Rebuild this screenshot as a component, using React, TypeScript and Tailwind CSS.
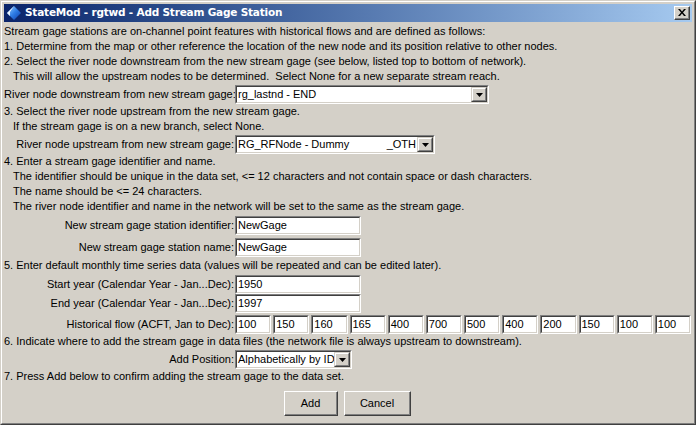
import React from "react";

// Classic Windows look: sunken fields, raised buttons
const sunken =
  "border-t border-l border-t-[#808080] border-l-[#808080] border-b border-r border-b-white border-r-white";
const sunkenInner =
  "border-t border-l border-t-[#404040] border-l-[#404040] border-b border-r border-b-[#d4d0c8] border-r-[#d4d0c8]";

function TextField({ value, className }: { value: string; className: string }) {
  return (
    <div className={`${sunken} ${className} h-[19px]`}>
      <div className={`${sunkenInner} h-full bg-white pl-[1px] leading-[15px]`}>{value}</div>
    </div>
  );
}

function ArrowButton() {
  return (
    <div className="h-full w-[16px] border-t border-l border-t-[#d4d0c8] border-l-[#d4d0c8] border-b border-r border-b-[#404040] border-r-[#404040]">
      <div className="flex h-full items-center justify-center border-t border-l border-t-white border-l-white border-b border-r border-b-[#808080] border-r-[#808080] bg-[#d4d0c8]">
        <svg width="7" height="4" viewBox="0 0 7 4">
          <path d="M0 0H7L3.5 4Z" fill="#000" />
        </svg>
      </div>
    </div>
  );
}

function Combo({ value, className, extra }: { value: string; className: string; extra?: string }) {
  return (
    <div className={`${sunken} ${className} h-[19px]`}>
      <div className={`${sunkenInner} flex h-full bg-white`}>
        <div className="flex flex-1 justify-between pl-[1px] leading-[15px] whitespace-nowrap overflow-hidden">
          <span>{value}</span>
          {extra && <span className="pr-[1px]">{extra}</span>}
        </div>
        <ArrowButton />
      </div>
    </div>
  );
}

function Line({ children, indent, className }: { children: React.ReactNode; indent?: boolean; className?: string }) {
  return (
    <div className={`h-[15px] leading-[15px] whitespace-nowrap ${indent ? "pl-[9px]" : ""} ${className ?? ""}`}>
      {children}
    </div>
  );
}

function Row({ label, children, className }: { label: string; children: React.ReactNode; className?: string }) {
  return (
    <div className={`flex items-center ${className ?? ""}`}>
      <div className="w-[231px] shrink-0 text-right whitespace-nowrap pr-[1px]">{label}</div>
      {children}
    </div>
  );
}

function Button({ label, className }: { label: string; className: string }) {
  return (
    <div className={`h-[25px] border-t border-l border-t-white border-l-white border-b border-r border-b-[#404040] border-r-[#404040] ${className}`}>
      <div className="flex h-full items-center justify-center border-b border-r border-b-[#808080] border-r-[#808080]">
        {label}
      </div>
    </div>
  );
}

const flows = ["100", "150", "160", "165", "400", "700", "500", "400", "200", "150", "100", "100"];

export default function App() {
  return (
    <div
      className="h-[425px] w-[696px] overflow-hidden bg-[#d4d0c8] text-[11px] text-black"
      style={{ fontFamily: "'Liberation Sans', Arial, sans-serif" }}
    >
      {/* window frame */}
      <div className="h-full w-full border-t border-l border-t-[#d4d0c8] border-l-[#d4d0c8] border-b border-r border-b-[#404040] border-r-[#404040]">
        <div className="h-full w-full border-t border-l border-t-white border-l-white border-b border-r border-b-[#808080] border-r-[#808080] p-[2px] pb-0">
          {/* title bar */}
          <div className="flex h-[18px] items-center bg-gradient-to-r from-[#0a246a] to-[#a6caf0] pl-[2px] pr-[2px]">
            <svg width="16" height="16" viewBox="0 0 16 16" className="shrink-0">
              <defs>
                <linearGradient id="ic" x1="0" y1="0" x2="1" y2="1">
                  <stop offset="0" stopColor="#9fd4ff" />
                  <stop offset="0.5" stopColor="#2f7ee6" />
                  <stop offset="1" stopColor="#0b3aa8" />
                </linearGradient>
              </defs>
              <path d="M8 1L15 8L8 15L1 8Z" fill="url(#ic)" />
              <path d="M8 1L1 8L4 11L4 7Z" fill="#e8f4ff" />
            </svg>
            <span className="ml-[3px] flex-1 text-[10.5px] font-bold tracking-[-0.2px] text-white whitespace-nowrap font-['DejaVu_Sans',Verdana,sans-serif]">
              StateMod - rgtwd - Add Stream Gage Station
            </span>
            <div className="h-[14px] w-[16px] border-t border-l border-t-white border-l-white border-b border-r border-b-[#404040] border-r-[#404040] bg-[#d4d0c8]">
              <div className="flex h-full items-center justify-center border-b border-r border-b-[#808080] border-r-[#808080]">
                <svg width="8" height="7" viewBox="0 0 8 7">
                  <path d="M0 0H2L4 2.5L6 0H8L5 3.5L8 7H6L4 4.5L2 7H0L3 3.5Z" fill="#000" />
                </svg>
              </div>
            </div>
          </div>

          {/* body */}
          <div className="mt-[2px] flex flex-col">
            <Line>Stream gage stations are on-channel point features with historical flows and are defined as follows:</Line>
            <Line>1. Determine from the map or other reference the location of the new node and its position relative to other nodes.</Line>
            <Line>2. Select the river node downstream from the new stream gage (see below, listed top to bottom of network).</Line>
            <Line indent>This will allow the upstream nodes to be determined.&nbsp; Select None for a new separate stream reach.</Line>
            <Row label="River node downstream from new stream gage:" className="mt-[1px]">
              <Combo value="rg_lastnd - END" className="w-[254px]" />
            </Row>
            <Line>3. Select the river node upstream from the new stream gage.</Line>
            <Line indent>If the stream gage is on a new branch, select None.</Line>
            <Row label="River node upstream from new stream gage:" className="mt-[1px]">
              <Combo value="RG_RFNode - Dummy" extra="_OTH" className="w-[200px]" />
            </Row>
            <Line>4. Enter a stream gage identifier and name.</Line>
            <Line indent>The identifier should be unique in the data set, &lt;= 12 characters and not contain space or dash characters.</Line>
            <Line indent>The name should be &lt;= 24 characters.</Line>
            <Line indent>The river node identifier and name in the network will be set to the same as the stream gage.</Line>
            <Row label="New stream gage station identifier:" className="mt-[2px]">
              <TextField value="NewGage" className="w-[126px]" />
            </Row>
            <Row label="New stream gage station name:" className="mt-[3px]">
              <TextField value="NewGage" className="w-[126px]" />
            </Row>
            <Line className="mt-[1px]">5. Enter default monthly time series data (values will be repeated and can be edited later).</Line>
            <Row label="Start year (Calendar Year - Jan...Dec):" className="mt-[2px]">
              <TextField value="1950" className="w-[126px]" />
            </Row>
            <Row label="End year (Calendar Year - Jan...Dec):">
              <TextField value="1997" className="w-[126px]" />
            </Row>
            <Row label="Historical flow (ACFT, Jan to Dec):" className="mt-[2px]">
              <div className="grid w-[456px] grid-cols-12 gap-[2px]">
                {flows.map((f, i) => (
                  <TextField key={i} value={f} className="w-full" />
                ))}
              </div>
            </Row>
            <Line>6. Indicate where to add the stream gage in data files (the network file is always upstream to downstream).</Line>
            <Row label="Add Position:" className="mt-[1px]">
              <Combo value="Alphabetically by ID" className="w-[117px]" />
            </Row>
            <Line>7. Press Add below to confirm adding the stream gage to the data set.</Line>
            <div className="mt-[7px] flex gap-[6px] pl-[280px]">
              <Button label="Add" className="w-[54px]" />
              <Button label="Cancel" className="w-[67px]" />
            </div>
          </div>
        </div>
      </div>
    </div>
  );
}
